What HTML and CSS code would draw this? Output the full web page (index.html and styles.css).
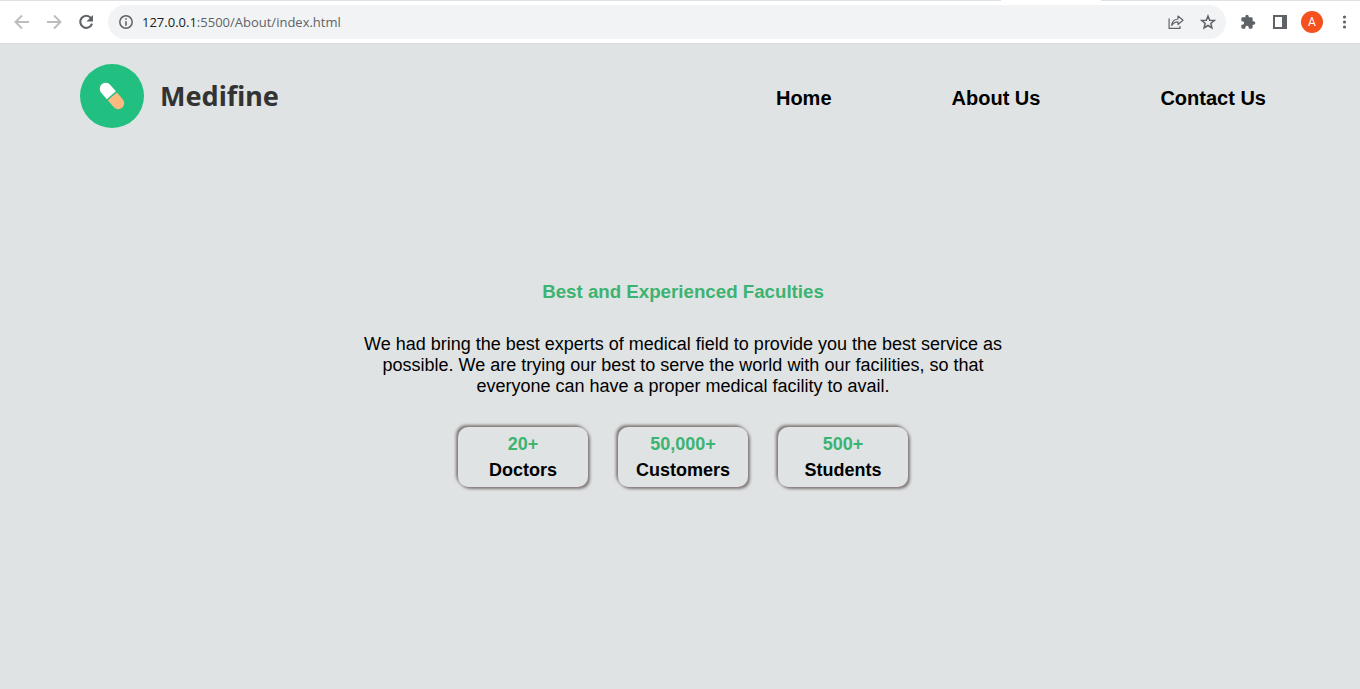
FILE: index.html
```html
<!DOCTYPE html>
<html lang="en">
<head>
<meta charset="utf-8">
<title>Medifine - About Us</title>
<link rel="stylesheet" href="styles.css">
</head>
<body>
<div class="tabstrip"><span class="active-tab"></span></div>
<div class="toolbar">
  <button class="tool faded" aria-label="Back"><svg width="16" height="16" viewBox="0 0 16 16"><path d="M15 8H2M8 1.500L1.500 8L8 14.500" fill="none" stroke="currentColor" stroke-width="1.900"/></svg></button>
  <button class="tool faded" aria-label="Forward"><svg width="16" height="16" viewBox="0 0 16 16"><path d="M1 8H14M8 1.500L14.500 8L8 14.500" fill="none" stroke="currentColor" stroke-width="1.900"/></svg></button>
  <button class="tool" aria-label="Reload"><svg width="16" height="16" viewBox="0 0 16 16"><path d="M12.900 4A6 6 0 1 0 14 9.600" fill="none" stroke="currentColor" stroke-width="2.100"/><path d="M15 1v6.500H8.500z" fill="currentColor"/></svg></button>
  <div class="omnibox">
    <button class="info" aria-label="Site information"><svg width="14" height="14" viewBox="0 0 14 14"><circle cx="7" cy="7" r="6.200" fill="none" stroke="currentColor" stroke-width="1.500"/><path d="M6.200 3.200h1.600v1.600H6.200zM6.200 6.200h1.600v4.600H6.200z" fill="currentColor"/></svg></button>
    <div class="url"><span class="host">127.0.0.1</span>:5500/About/index.html</div>
    <button class="tool" aria-label="Share"><svg width="16" height="16" viewBox="0 0 16 16" fill="none" stroke="currentColor" stroke-width="1.200"><path d="M1.100 4.500V14.400H12V12"/><path d="M3.700 11.500C4 7.500 6.400 5.300 10 5V2L15 6.300L10 10.500V7.800C7 7.800 5.200 9 3.700 11.500z" stroke-linejoin="round"/></svg></button>
    <button class="tool" aria-label="Bookmark"><svg width="16" height="16" viewBox="0 0 16 16"><path d="M8 2l1.700 4.200 4.500.3-3.400 3 1.100 4.400L8 11.500l-3.900 2.400 1.100-4.400-3.400-3 4.500-.3z" fill="none" stroke="currentColor" stroke-width="1.500"/></svg></button>
  </div>
  <button class="tool" aria-label="Extensions"><svg width="16" height="16" viewBox="0 0 24 24"><path fill="currentColor" d="M20.500 11H19V7a2 2 0 0 0-2-2h-4V3.500a2.500 2.500 0 0 0-5 0V5H4a2 2 0 0 0-2 2v3.800h1.500a2.700 2.700 0 0 1 0 5.400H2V20c0 1.100.9 2 2 2h3.800v-1.500a2.700 2.700 0 0 1 5.400 0V22H17a2 2 0 0 0 2-2v-4h1.500a2.500 2.500 0 0 0 0-5z"/></svg></button>
  <button class="tool" aria-label="Side panel"><svg width="16" height="16" viewBox="0 0 16 16"><path fill="currentColor" fill-rule="evenodd" d="M1 1h14v14H1zM3 3v10h7V3z"/></svg></button>
  <button class="avatar" aria-label="Profile A">A</button>
  <button class="tool" aria-label="Menu"><svg width="16" height="16" viewBox="0 0 16 16" fill="currentColor"><circle cx="8.500" cy="3" r="1.600"/><circle cx="8.500" cy="8" r="1.600"/><circle cx="8.500" cy="13" r="1.600"/></svg></button>
</div>
<header class="site-header">
  <a class="brand" href="#"><svg width="64" height="64" viewBox="0 0 64 64"><circle cx="32" cy="32" r="32" fill="#21bf80"/><g transform="translate(32 32) rotate(-41)"><path d="M-6-1V-9.500a6 6 0 0 1 12 0V-1z" fill="#fff"/><path d="M-6 .5V9.500a6 6 0 0 0 12 0V.5z" fill="#ffb980"/></g></svg><span>Medifine</span></a>
  <nav class="nav"><a href="#">Home</a><a href="#">About Us</a><a href="#">Contact Us</a></nav>
</header>
<main class="about">
  <h3>Best and Experienced Faculties</h3>
  <p>We had bring the best experts of medical field to provide you the best service as possible. We are trying our best to serve the world with our facilities, so that everyone can have a proper medical facility to avail.</p>
  <div class="stats">
    <div class="stat"><strong>20+</strong><span>Doctors</span></div>
    <div class="stat"><strong>50,000+</strong><span>Customers</span></div>
    <div class="stat"><strong>500+</strong><span>Students</span></div>
  </div>
</main>
</body>
</html>
```
FILE: styles.css
```css
* { box-sizing: border-box; }
body {
  margin: 0;
  background: #dfe3e3;
  color: #000;
  font-family: "Liberation Sans", Arial, sans-serif;
}
button {
  border: 0;
  padding: 0;
  background: none;
  color: #5f6368;
}
a { color: inherit; text-decoration: none; }
.tabstrip {
  height: 1px;
  background: #dee1e6;
  padding-left: 1001px;
}
.active-tab {
  display: block;
  width: 100px;
  height: 1px;
  background: #fff;
}
.toolbar {
  display: flex;
  align-items: center;
  gap: 16px;
  height: 43px;
  padding: 0 8px 0 14px;
  background: #fff;
  border-bottom: 1px solid #d8dcdc;
}
.tool, .info { display: flex; }
.faded { color: #babcbe; }
.omnibox {
  flex: 1;
  display: flex;
  align-items: center;
  gap: 16px;
  height: 34px;
  margin: 0 -2px 0 -2px;
  padding: 0 10px 0 11px;
  border-radius: 17px;
  background: #f1f3f4;
}
.url {
  flex: 1;
  margin-left: -7px;
  color: #5f6368;
  font: 13px/20px "Open Sans", "Noto Sans", sans-serif;
}
.host { color: #202124; }
.avatar {
  width: 22px;
  height: 22px;
  margin: 0 -3px;
  border-radius: 50%;
  background: #f4511e;
  color: #fff;
  font: 12px/22px Roboto, sans-serif;
}
.site-header {
  display: flex;
  align-items: center;
  justify-content: space-between;
  padding: 20px 94px 20px 80px;
}
.brand {
  display: flex;
  align-items: center;
  gap: 16px;
  color: #333;
  font: bold 27px/40px "Noto Sans", sans-serif;
}
.nav {
  display: flex;
  gap: 120px;
  padding-top: 4px;
  font-size: 20px;
  font-weight: bold;
}
.about {
  width: 50%;
  margin: 0 auto;
  padding: 132px 0 40px 6px;
  text-align: center;
}
.about h3 {
  margin: 0;
  color: #3cb371;
  line-height: 24px;
}
.about p {
  margin: 30px 12px;
  font-size: 18px;
  line-height: 21px;
}
.stats {
  display: flex;
  justify-content: center;
  gap: 30px;
}
.stat {
  display: flex;
  flex-direction: column;
  width: 130px;
  padding: 4px 0;
  border-radius: 10px;
  box-shadow: 2px 2px 3px #807878, -2px -2px 3px #807878;
  font-size: 18px;
  font-weight: bold;
  line-height: 26px;
}
.stat strong { color: #3cb371; }
```
